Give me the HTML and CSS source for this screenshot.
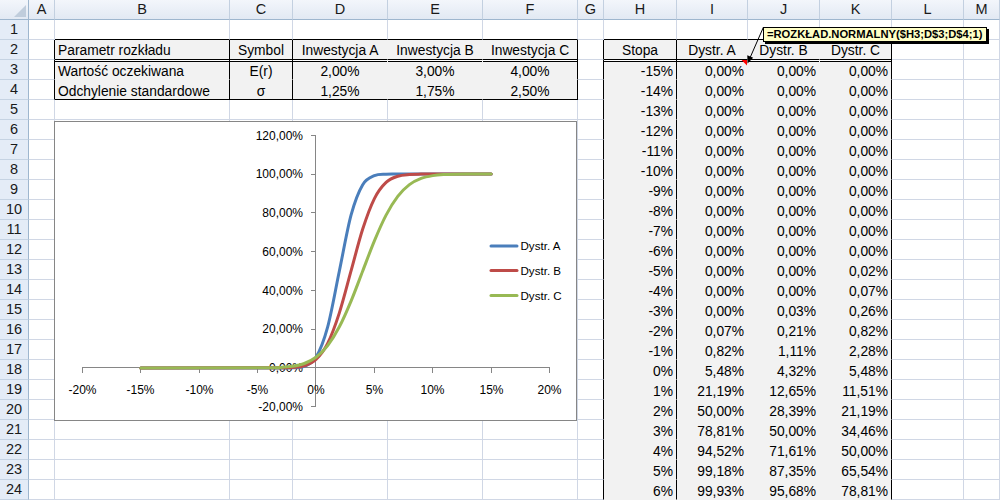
FILE: index.html
```html
<!DOCTYPE html>
<html lang="pl">
<head>
<meta charset="utf-8">
<title>Rozkład normalny</title>
<link rel="stylesheet" href="styles.css">
</head>
<body>
<div class="sheet">
  <div class="corner"></div><div class="ch">A</div><div class="ch">B</div><div class="ch">C</div><div class="ch">D</div><div class="ch">E</div><div class="ch">F</div><div class="ch">G</div><div class="ch">H</div><div class="ch">I</div><div class="ch">J</div><div class="ch">K</div><div class="ch">L</div><div class="ch">M</div>

  <div class="rh">1</div><div class="c"></div><div class="c bB"></div><div class="c bB"></div><div class="c bB"></div><div class="c bB"></div><div class="c bB"></div><div class="c"></div><div class="c bB"></div><div class="c bB"></div><div class="c bB"></div><div class="c bB"></div><div class="c"></div><div class="c"></div>

  <div class="rh">2</div><div class="c bR"></div><div class="c t hd bR">Parametr rozkładu</div><div class="c t hd bR ctr">Symbol</div><div class="c t hd ctr">Inwestycja A</div><div class="c t hd ctr">Inwestycja B</div><div class="c t hd bR ctr">Inwestycja C</div><div class="c bR"></div><div class="c t hd bR ctr">Stopa</div><div class="c t hd ctr">Dystr. A</div><div class="c t hd ctr">Dystr. B</div><div class="c t hd bR ctr">Dystr. C</div><div class="c"></div><div class="c"></div>

  <div class="rh">3</div><div class="c bR"></div><div class="c t r3 bR">Wartość oczekiwana</div><div class="c t r3 bR ctr">E(r)</div><div class="c t r3 ctr">2,00%</div><div class="c t r3 ctr">3,00%</div><div class="c t r3 bR ctr">4,00%</div><div class="c bR"></div><div class="c t r3 bR num">-15%</div><div class="c t r3 num">0,00%</div><div class="c t r3 num">0,00%</div><div class="c t r3 bR num">0,00%</div><div class="c"></div><div class="c"></div>

  <div class="rh">4</div><div class="c bR"></div><div class="c t bB bR">Odchylenie standardowe</div><div class="c t bB bR ctr">σ</div><div class="c t bB ctr">1,25%</div><div class="c t bB ctr">1,75%</div><div class="c t bB bR ctr">2,50%</div><div class="c bR"></div><div class="c t bR num">-14%</div><div class="c t num">0,00%</div><div class="c t num">0,00%</div><div class="c t bR num">0,00%</div><div class="c"></div><div class="c"></div>

  <div class="rh">5</div><div class="c"></div><div class="c"></div><div class="c"></div><div class="c"></div><div class="c"></div><div class="c"></div><div class="c bR"></div><div class="c t bR num">-13%</div><div class="c t num">0,00%</div><div class="c t num">0,00%</div><div class="c t bR num">0,00%</div><div class="c"></div><div class="c"></div>

  <div class="rh">6</div><div class="c"></div><div class="c"></div><div class="c"></div><div class="c"></div><div class="c"></div><div class="c"></div><div class="c bR"></div><div class="c t bR num">-12%</div><div class="c t num">0,00%</div><div class="c t num">0,00%</div><div class="c t bR num">0,00%</div><div class="c"></div><div class="c"></div>

  <div class="rh">7</div><div class="c"></div><div class="c"></div><div class="c"></div><div class="c"></div><div class="c"></div><div class="c"></div><div class="c bR"></div><div class="c t bR num">-11%</div><div class="c t num">0,00%</div><div class="c t num">0,00%</div><div class="c t bR num">0,00%</div><div class="c"></div><div class="c"></div>

  <div class="rh">8</div><div class="c"></div><div class="c"></div><div class="c"></div><div class="c"></div><div class="c"></div><div class="c"></div><div class="c bR"></div><div class="c t bR num">-10%</div><div class="c t num">0,00%</div><div class="c t num">0,00%</div><div class="c t bR num">0,00%</div><div class="c"></div><div class="c"></div>

  <div class="rh">9</div><div class="c"></div><div class="c"></div><div class="c"></div><div class="c"></div><div class="c"></div><div class="c"></div><div class="c bR"></div><div class="c t bR num">-9%</div><div class="c t num">0,00%</div><div class="c t num">0,00%</div><div class="c t bR num">0,00%</div><div class="c"></div><div class="c"></div>

  <div class="rh">10</div><div class="c"></div><div class="c"></div><div class="c"></div><div class="c"></div><div class="c"></div><div class="c"></div><div class="c bR"></div><div class="c t bR num">-8%</div><div class="c t num">0,00%</div><div class="c t num">0,00%</div><div class="c t bR num">0,00%</div><div class="c"></div><div class="c"></div>

  <div class="rh">11</div><div class="c"></div><div class="c"></div><div class="c"></div><div class="c"></div><div class="c"></div><div class="c"></div><div class="c bR"></div><div class="c t bR num">-7%</div><div class="c t num">0,00%</div><div class="c t num">0,00%</div><div class="c t bR num">0,00%</div><div class="c"></div><div class="c"></div>

  <div class="rh">12</div><div class="c"></div><div class="c"></div><div class="c"></div><div class="c"></div><div class="c"></div><div class="c"></div><div class="c bR"></div><div class="c t bR num">-6%</div><div class="c t num">0,00%</div><div class="c t num">0,00%</div><div class="c t bR num">0,00%</div><div class="c"></div><div class="c"></div>

  <div class="rh">13</div><div class="c"></div><div class="c"></div><div class="c"></div><div class="c"></div><div class="c"></div><div class="c"></div><div class="c bR"></div><div class="c t bR num">-5%</div><div class="c t num">0,00%</div><div class="c t num">0,00%</div><div class="c t bR num">0,02%</div><div class="c"></div><div class="c"></div>

  <div class="rh">14</div><div class="c"></div><div class="c"></div><div class="c"></div><div class="c"></div><div class="c"></div><div class="c"></div><div class="c bR"></div><div class="c t bR num">-4%</div><div class="c t num">0,00%</div><div class="c t num">0,00%</div><div class="c t bR num">0,07%</div><div class="c"></div><div class="c"></div>

  <div class="rh">15</div><div class="c"></div><div class="c"></div><div class="c"></div><div class="c"></div><div class="c"></div><div class="c"></div><div class="c bR"></div><div class="c t bR num">-3%</div><div class="c t num">0,00%</div><div class="c t num">0,03%</div><div class="c t bR num">0,26%</div><div class="c"></div><div class="c"></div>

  <div class="rh">16</div><div class="c"></div><div class="c"></div><div class="c"></div><div class="c"></div><div class="c"></div><div class="c"></div><div class="c bR"></div><div class="c t bR num">-2%</div><div class="c t num">0,07%</div><div class="c t num">0,21%</div><div class="c t bR num">0,82%</div><div class="c"></div><div class="c"></div>

  <div class="rh">17</div><div class="c"></div><div class="c"></div><div class="c"></div><div class="c"></div><div class="c"></div><div class="c"></div><div class="c bR"></div><div class="c t bR num">-1%</div><div class="c t num">0,82%</div><div class="c t num">1,11%</div><div class="c t bR num">2,28%</div><div class="c"></div><div class="c"></div>

  <div class="rh">18</div><div class="c"></div><div class="c"></div><div class="c"></div><div class="c"></div><div class="c"></div><div class="c"></div><div class="c bR"></div><div class="c t bR num">0%</div><div class="c t num">5,48%</div><div class="c t num">4,32%</div><div class="c t bR num">5,48%</div><div class="c"></div><div class="c"></div>

  <div class="rh">19</div><div class="c"></div><div class="c"></div><div class="c"></div><div class="c"></div><div class="c"></div><div class="c"></div><div class="c bR"></div><div class="c t bR num">1%</div><div class="c t num">21,19%</div><div class="c t num">12,65%</div><div class="c t bR num">11,51%</div><div class="c"></div><div class="c"></div>

  <div class="rh">20</div><div class="c"></div><div class="c"></div><div class="c"></div><div class="c"></div><div class="c"></div><div class="c"></div><div class="c bR"></div><div class="c t bR num">2%</div><div class="c t num">50,00%</div><div class="c t num">28,39%</div><div class="c t bR num">21,19%</div><div class="c"></div><div class="c"></div>

  <div class="rh">21</div><div class="c"></div><div class="c"></div><div class="c"></div><div class="c"></div><div class="c"></div><div class="c"></div><div class="c bR"></div><div class="c t bR num">3%</div><div class="c t num">78,81%</div><div class="c t num">50,00%</div><div class="c t bR num">34,46%</div><div class="c"></div><div class="c"></div>

  <div class="rh">22</div><div class="c"></div><div class="c"></div><div class="c"></div><div class="c"></div><div class="c"></div><div class="c"></div><div class="c bR"></div><div class="c t bR num">4%</div><div class="c t num">94,52%</div><div class="c t num">71,61%</div><div class="c t bR num">50,00%</div><div class="c"></div><div class="c"></div>

  <div class="rh">23</div><div class="c"></div><div class="c"></div><div class="c"></div><div class="c"></div><div class="c"></div><div class="c"></div><div class="c bR"></div><div class="c t bR num">5%</div><div class="c t num">99,18%</div><div class="c t num">87,35%</div><div class="c t bR num">65,54%</div><div class="c"></div><div class="c"></div>

  <div class="rh">24</div><div class="c"></div><div class="c"></div><div class="c"></div><div class="c"></div><div class="c"></div><div class="c"></div><div class="c bR"></div><div class="c t bR num">6%</div><div class="c t num">99,93%</div><div class="c t num">95,68%</div><div class="c t bR num">78,81%</div><div class="c"></div><div class="c"></div>

  <div class="chart">
    <svg class="chart-svg" width="524" height="300" viewBox="54 121 524 300" xmlns="http://www.w3.org/2000/svg">
      <rect x="54.5" y="121.5" width="522" height="299" fill="#fff" stroke="#868686"/>
      <g class="axis" stroke="#868686" stroke-width="1" fill="none">
        <line x1="315.5" y1="135" x2="315.5" y2="407"/>
        <line x1="311" y1="135.5" x2="316" y2="135.5"/>
        <line x1="311" y1="174.5" x2="316" y2="174.5"/>
        <line x1="311" y1="212.5" x2="316" y2="212.5"/>
        <line x1="311" y1="251.5" x2="316" y2="251.5"/>
        <line x1="311" y1="290.5" x2="316" y2="290.5"/>
        <line x1="311" y1="329.5" x2="316" y2="329.5"/>
        <line x1="311" y1="406.5" x2="316" y2="406.5"/>
        <line x1="82" y1="367.5" x2="550" y2="367.5"/>
        <line x1="82.5" y1="367" x2="82.5" y2="373"/>
        <line x1="140.5" y1="367" x2="140.5" y2="373"/>
        <line x1="199.5" y1="367" x2="199.5" y2="373"/>
        <line x1="257.5" y1="367" x2="257.5" y2="373"/>
        <line x1="315.5" y1="367" x2="315.5" y2="373"/>
        <line x1="374.5" y1="367" x2="374.5" y2="373"/>
        <line x1="432.5" y1="367" x2="432.5" y2="373"/>
        <line x1="491.5" y1="367" x2="491.5" y2="373"/>
        <line x1="549.5" y1="367" x2="549.5" y2="373"/>
      </g>
      <g class="lbl" text-anchor="end">
        <text x="303" y="139.6">120,00%</text>
        <text x="303" y="178.4">100,00%</text>
        <text x="303" y="217.1">80,00%</text>
        <text x="303" y="255.9">60,00%</text>
        <text x="303" y="294.7">40,00%</text>
        <text x="303" y="333.4">20,00%</text>
        <text x="303" y="372.2">0,00%</text>
        <text x="303" y="411">-20,00%</text>
      </g>
      <g class="lbl" text-anchor="middle">
        <text x="82.5" y="393.5">-20%</text>
        <text x="140.5" y="393.5">-15%</text>
        <text x="199.5" y="393.5">-10%</text>
        <text x="257.5" y="393.5">-5%</text>
        <text x="316" y="393.5">0%</text>
        <text x="374.5" y="393.5">5%</text>
        <text x="432.5" y="393.5">10%</text>
        <text x="491.5" y="393.5">15%</text>
        <text x="549.5" y="393.5">20%</text>
      </g>
      <g fill="none" stroke-width="3" stroke-linecap="round" stroke-linejoin="round">
        <path stroke="#4a7ebb" d="M140.8 367.9 L280.96 367.89 C284.85 367.87 288.75 368.03 292.64 367.77 C296.53 367.51 300.43 368.06 304.32 366.31 C308.21 364.56 312.11 363.86 316 357.28 C319.89 350.70 323.79 341.21 327.68 326.82 C331.57 312.44 335.47 289.59 339.36 270.97 C343.25 252.36 347.15 229.51 351.04 215.13 C354.93 200.75 358.83 191.25 362.72 184.67 C366.61 178.09 370.51 177.39 374.4 175.64 C378.29 173.89 382.19 174.44 386.08 174.18 C389.97 173.92 393.87 174.08 397.76 174.06 C401.65 174.04 405.55 174.05 409.44 174.05 L491.2 174.05"/>
        <path stroke="#be4b48" d="M140.8 367.9 L280.96 367.84 C284.85 367.77 288.75 367.84 292.64 367.49 C296.53 367.14 300.43 367.07 304.32 365.74 C308.21 364.41 312.11 363.26 316 359.53 C319.89 355.80 323.79 351.16 327.68 343.38 C331.57 335.60 335.47 324.94 339.36 312.87 C343.25 300.80 347.15 284.94 351.04 270.97 C354.93 257.01 358.83 241.15 362.72 229.08 C366.61 217.01 370.51 206.35 374.4 198.57 C378.29 190.79 382.19 186.15 386.08 182.42 C389.97 178.69 393.87 177.54 397.76 176.21 C401.65 174.88 405.55 174.81 409.44 174.46 C413.33 174.11 417.23 174.18 421.12 174.11 C425.01 174.04 428.91 174.07 432.8 174.06 L491.2 174.05"/>
        <path stroke="#98b954" d="M140.8 367.9 L257.6 367.87 C261.49 367.85 265.39 367.85 269.28 367.77 C273.17 367.69 277.07 367.64 280.96 367.40 C284.85 367.16 288.75 366.96 292.64 366.31 C296.53 365.66 300.43 365.00 304.32 363.49 C308.21 361.99 312.11 360.26 316 357.28 C319.89 354.30 323.79 350.67 327.68 345.59 C331.57 340.51 335.47 334.24 339.36 326.82 C343.25 319.41 347.15 310.41 351.04 301.10 C354.93 291.79 358.83 281.01 362.72 270.97 C366.61 260.93 370.51 250.16 374.4 240.85 C378.29 231.54 382.19 222.55 386.08 215.13 C389.97 207.72 393.87 201.44 397.76 196.36 C401.65 191.28 405.55 187.65 409.44 184.67 C413.33 181.69 417.23 179.97 421.12 178.46 C425.01 176.96 428.91 176.29 432.8 175.64 C436.69 174.99 440.59 174.79 444.48 174.55 C448.37 174.31 452.27 174.26 456.16 174.18 C460.05 174.10 463.95 174.10 467.84 174.08 C471.73 174.06 475.63 174.07 479.52 174.06 L491.2 174.05"/>
      </g>
      <g stroke-width="3" stroke-linecap="round">
        <line x1="491" y1="246" x2="517" y2="246" stroke="#4a7ebb"/>
        <line x1="491" y1="270.5" x2="517" y2="270.5" stroke="#be4b48"/>
        <line x1="491" y1="295.5" x2="517" y2="295.5" stroke="#98b954"/>
      </g>
      <g class="legend">
        <text x="520.5" y="250.3">Dystr. A</text>
        <text x="520.5" y="274.8">Dystr. B</text>
        <text x="520.5" y="299.8">Dystr. C</text>
      </g>
    </svg>
  </div>

  <svg class="callout" width="30" height="46" viewBox="738 22 30 46" xmlns="http://www.w3.org/2000/svg">
    <polygon points="741.5,60 747,60 747,65.5" fill="#ff0000"/>
    <line x1="763.5" y1="27" x2="749.5" y2="59" stroke="#000" stroke-width="1"/>
    <polygon points="747.5,63.5 753.2,57.8 747.3,55.2" fill="#000"/>
  </svg>

  <div class="note">=ROZKŁAD.NORMALNY($H3;D$3;D$4;1)</div>
</div>
</body>
</html>
```

FILE: styles.css
```css
* {
  box-sizing: border-box;
}

html,
body {
  margin: 0;
  padding: 0;
  background: #ffffff;
}

body {
  font-family: "Liberation Sans", Arial, sans-serif;
  font-size: 13.8px;
  color: #000000;
  overflow: hidden;
}

.sheet {
  position: relative;
  width: 1000px;
  height: 500px;
  display: grid;
  grid-template-columns: 29px 26px 175px 63px 95px 95px 95px 26px 73px 71px 72px 72px 72px 36px;
  grid-auto-rows: 20px;
  overflow: hidden;
}

/* column headers */
.corner,
.ch {
  position: relative;
  background: linear-gradient(#f3f6fb, #e2e9f3);
  border-right: 1px solid #c3d0e0;
  border-bottom: 1px solid #9eb6ce;
  font-size: 14.5px;
  color: #1a1a1a;
  text-align: center;
  line-height: 19px;
  padding-top: 0;
}

.corner {
  border-right: 1px solid #9eb6ce;
}

.corner::after {
  content: "";
  position: absolute;
  right: 2px;
  bottom: 2px;
  width: 0;
  height: 0;
  border-left: 12px solid transparent;
  border-bottom: 12px solid #c0cddc;
}

/* row headers */
.rh {
  background: #e4ecf7;
  border-right: 1px solid #9eb6ce;
  border-bottom: 1px solid #c5d3e3;
  font-size: 14.5px;
  color: #1a1a1a;
  text-align: center;
  line-height: 19px;
  padding-top: 0;
}

/* cells */
.c {
  border-right: 1px solid #d0d7e5;
  border-bottom: 1px solid #d0d7e5;
  padding: 2px 3px 0 3px;
  line-height: 19px;
  white-space: nowrap;
}

.t {
  background: #f2f2f2;
  border-right-color: #f2f2f2;
  border-bottom-color: #f2f2f2;
}

.hd {
  border-bottom-color: #000000;
  padding-top: 1px;
}

.r3 {
  box-shadow: inset 0 1px 0 #ffffff, inset 0 2px 0 #000000;
}

.bR {
  border-right-color: #000000;
}

.bB {
  border-bottom-color: #000000;
}

.ctr {
  text-align: center;
}

.num {
  text-align: right;
}

/* floating chart object */
.chart {
  position: absolute;
  left: 54px;
  top: 121px;
  width: 524px;
  height: 300px;
}

.chart-svg {
  display: block;
}

.lbl text {
  font-family: "Liberation Sans", Arial, sans-serif;
  font-size: 12px;
  fill: #000000;
}

.legend text {
  font-family: "Liberation Sans", Arial, sans-serif;
  font-size: 11.6px;
  fill: #000000;
}

/* comment callout */
.callout {
  position: absolute;
  left: 738px;
  top: 22px;
  overflow: visible;
}

.note {
  position: absolute;
  left: 763px;
  top: 27px;
  width: 224px;
  height: 15px;
  background: #ffffc6;
  border: 1px solid #000000;
  box-shadow: 2px 2px 0 #000000;
  font-family: "Liberation Sans", Arial, sans-serif;
  font-weight: bold;
  font-size: 11.2px;
  line-height: 13px;
  padding-left: 3px;
  white-space: nowrap;
  color: #000000;
}
```
